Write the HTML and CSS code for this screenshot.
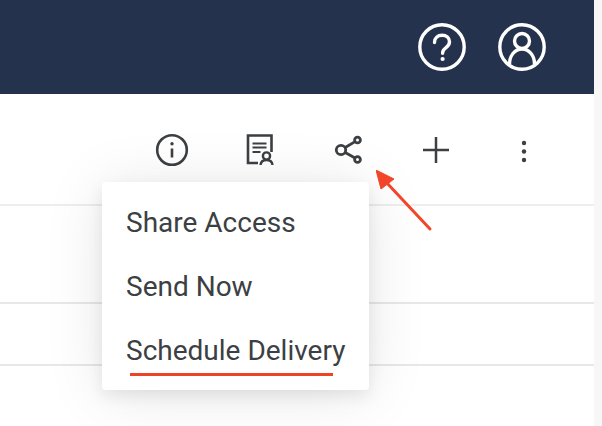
FILE: index.html
```html
<!DOCTYPE html>
<html lang="en">
<head>
  <meta charset="UTF-8">
  <title>Schedule Delivery</title>
  <link rel="stylesheet" href="styles.css">
</head>
<body>
  <div class="page">
    <header class="topbar">
      <svg class="top-icon" viewBox="0 0 48 48" fill="none" stroke="#fff" stroke-width="3.4">
        <circle cx="24" cy="24" r="22.2"/>
        <path d="M16.500 19.500c0-4.500 3.200-7.200 7.600-7.200 4.300 0 7.400 2.700 7.400 6.500 0 3-1.600 4.500-3.700 6-2.300 1.600-3.200 2.900-3.200 5.400" stroke-linecap="round"/>
        <circle cx="24.600" cy="36" r="2.100" fill="#fff" stroke="none"/>
      </svg>
      <svg class="top-icon" viewBox="0 0 48 48" fill="none" stroke="#fff" stroke-width="3.4">
        <circle cx="24" cy="24" r="22.2"/>
        <circle cx="24" cy="18" r="7.500"/>
        <path d="M11.500 41c0-8 5-15 12.500-15s12.500 7 12.500 15"/>
      </svg>
    </header>

    <div class="toolbar">
      <button class="tool">
        <svg viewBox="0 0 34 34" fill="none" stroke="#3c4043" stroke-width="2.600">
          <circle cx="17" cy="17" r="14.800"/>
          <path d="M17 15.500v9"/>
          <circle cx="17" cy="10.800" r="1.700" fill="#3c4043" stroke="none"/>
        </svg>
      </button>
      <button class="tool">
        <svg viewBox="0 0 34 34" fill="none" stroke="#3c4043" stroke-width="2.600">
          <path d="M15 30H5V2.500h23.500V19"/>
          <path d="M9.500 10.500h14M9.500 14.500h14M9.500 19h8" stroke-width="2.200"/>
          <circle cx="23.500" cy="23" r="3.600" stroke-width="2.400"/>
          <path d="M17.500 32c.3-3.300 2.700-5 6-5s5.700 1.700 6 5" stroke-width="2.400"/>
        </svg>
      </button>
      <button class="tool">
        <svg viewBox="0 0 34 34" fill="none" stroke="#3c4043" stroke-width="2.800">
          <circle cx="10" cy="17" r="4.700"/>
          <circle cx="26.500" cy="7" r="2.900"/>
          <circle cx="26.500" cy="26.500" r="2.900"/>
          <path d="M14.200 14.500L24 8.600M14.200 19.500L24 25"/>
        </svg>
      </button>
      <button class="tool">
        <svg viewBox="0 0 34 34" fill="none" stroke="#3c4043" stroke-width="2.500">
          <path d="M17 4v26M4 17h26"/>
        </svg>
      </button>
      <button class="tool">
        <svg viewBox="0 0 34 34" fill="#3c4043">
          <circle cx="17" cy="10" r="2.200"/>
          <circle cx="17" cy="18.500" r="2.200"/>
          <circle cx="17" cy="27" r="2.200"/>
        </svg>
      </button>
    </div>

    <div class="row row-a"></div>
    <div class="row row-b"></div>
    <div class="row row-c"></div>
  </div>

  <ul class="menu">
    <li>Share Access</li>
    <li>Send Now</li>
    <li>Schedule Delivery</li>
  </ul>
  <div class="underline"></div>

  <svg class="arrow" viewBox="0 0 60 66">
    <path d="M54 59L10 12" stroke="#f2452a" stroke-width="3" stroke-linecap="round"/>
    <path d="M0 0L18 9 5 19z" fill="#f2452a" stroke="#f2452a" stroke-linejoin="round"/>
  </svg>
</body>
</html>
```

FILE: styles.css
```css
html, body {
  margin: 0;
  padding: 0;
  height: 100%;
  overflow: hidden;
  background-color: #f7f7f7;
}
body {
  font-family: 'Roboto', sans-serif;
  color: #3c4043;
}
.page {
  width: 594px;
  height: 426px;
  background-color: #fff;
}
.topbar {
  height: 94px;
  background-color: #25324d;
  display: flex;
  align-items: center;
  justify-content: flex-end;
  gap: 32px;
  padding-right: 48px;
  box-sizing: border-box;
}
.top-icon {
  width: 48px;
  height: 48px;
}
.toolbar {
  height: 112px;
  display: flex;
  padding: 0 26px 0 128px;
  box-sizing: border-box;
  border-bottom: 2px solid #eeeeee;
}
.tool {
  width: 88px;
  height: 112px;
  padding: 0;
  background: none;
  border: none;
  display: flex;
  align-items: center;
  justify-content: center;
}
.tool svg {
  width: 34px;
  height: 34px;
}
.row {
  box-sizing: border-box;
  border-bottom: 2px solid #e8e8e8;
}
.row-a {
  height: 98px;
}
.row-b {
  height: 62px;
}
.row-c {
  height: 60px;
  border-bottom: none;
}
/* dropdown sobre a tabela */
.menu {
  position: absolute;
  left: 102px;
  top: 182px;
  width: 267px;
  height: 208px;
  margin: 0;
  padding: 9px 0 0;
  box-sizing: border-box;
  list-style: none;
  background-color: #fff;
  border-radius: 4px;
  box-shadow: 0 6px 16px rgba(0, 0, 0, 0.08), 0 4px 60px rgba(0, 0, 0, 0.1);
}
.menu li {
  height: 64px;
  line-height: 64px;
  padding-left: 24px;
  font-size: 28px;
  white-space: nowrap;
}
.underline {
  position: absolute;
  left: 130px;
  top: 373px;
  width: 203px;
  height: 3px;
  background-color: #ee4327;
}
.arrow {
  position: absolute;
  left: 376px;
  top: 170px;
  width: 60px;
  height: 66px;
}
```
